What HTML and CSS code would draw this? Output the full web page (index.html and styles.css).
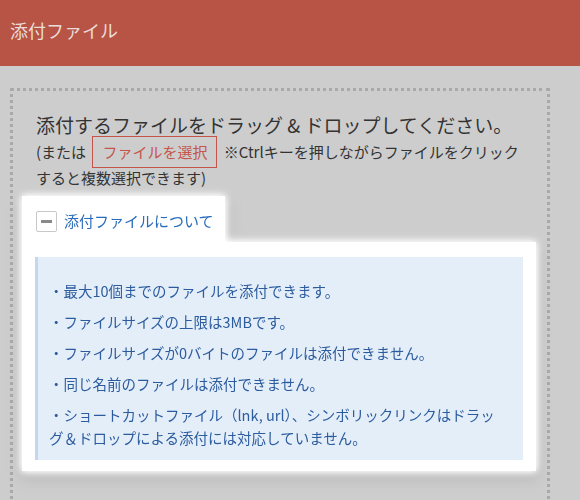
FILE: index.html
```html
<!DOCTYPE html>
<html lang="ja">
<head>
    <meta charset="UTF-8">
    <meta name="viewport" content="width=device-width, initial-scale=1.0">
    <title>添付ファイル</title>
    <link rel="stylesheet" href="styles.css">
</head>
<body>
    <div class="page-header">添付ファイル</div>

    <div class="drop-zone">
        <div class="drop-intro">
            <p class="drop-title">添付するファイルをドラッグ &amp; ドロップしてください。</p>
            <p class="drop-note">(または <span class="select-button">ファイルを選択</span> ※Ctrlキーを押しながらファイルをクリックすると複数選択できます)</p>
        </div>

        <div class="about">
            <div class="about-tab">
                <span class="toggle-icon"></span>
                <span class="about-label">添付ファイルについて</span>
            </div>
            <div class="about-panel">
                <div class="about-list">
                    <p>・最大10個までのファイルを添付できます。</p>
                    <p>・ファイルサイズの上限は3MBです。</p>
                    <p>・ファイルサイズが0バイトのファイルは添付できません。</p>
                    <p>・同じ名前のファイルは添付できません。</p>
                    <p>・ショートカットファイル（lnk, url）、シンボリックリンクはドラッ<br>グ＆ドロップによる添付には対応していません。</p>
                </div>
            </div>
        </div>
    </div>
</body>
</html>
```

FILE: styles.css
```css
body {
    font-family: "Noto Sans CJK JP", "Noto Sans", sans-serif;
    margin: 0;
    padding: 0;
    background-color: #cdcdcd;
    color: #333;
    overflow: hidden;
}

p {
    margin: 0;
}

.page-header {
    height: 66px;
    background: #b75445;
    color: #eadcd9;
    font-size: 18px;
    line-height: 60px;
    padding-left: 10px;
}

.drop-zone {
    margin: 22px 30px 0 10px;
    border: 3px dotted #a9a9a9;
    border-bottom: none;
    padding: 20px 11px 40px 9px;
}

.drop-intro {
    padding: 0 10px 0 14px;
}

.drop-title {
    font-size: 19px;
    line-height: 28px;
}

.drop-note {
    font-size: 15px;
    line-height: 26px;
}

.select-button {
    display: inline-block;
    border: 1px solid #c6544b;
    color: #c5564c;
    padding: 3px 9px;
    line-height: 24px;
    margin: -3px 3px;
}

.about {
    margin-top: 5px;
    filter: drop-shadow(0 0 3px #fff) drop-shadow(0 0 5px #fff) drop-shadow(0 4px 6px rgba(0, 0, 0, 0.15));
}

.about-tab {
    display: inline-flex;
    align-items: center;
    gap: 7px;
    background: #fff;
    padding: 14px 11px 10px 14px;
}

.toggle-icon {
    width: 19px;
    height: 19px;
    border: 1px solid #c8c8c8;
    border-radius: 2px;
    background: #fff;
    display: flex;
    align-items: center;
    justify-content: center;
}

.toggle-icon::before {
    content: "";
    width: 11px;
    height: 3px;
    background: #8a8a8a;
}

.about-label {
    font-size: 15px;
    line-height: 22px;
    color: #2a6cbc;
}

.about-panel {
    background: #fff;
    padding: 15px 13px 11px 13px;
}

.about-list {
    background: #e3eef9;
    border-left: 3px solid #c3d8ef;
    padding: 14px 12px 3px 11px;
    color: #2c5b9e;
    font-size: 14.5px;
    line-height: 23px;
}

.about-list p {
    margin: 8px 0;
}
```
